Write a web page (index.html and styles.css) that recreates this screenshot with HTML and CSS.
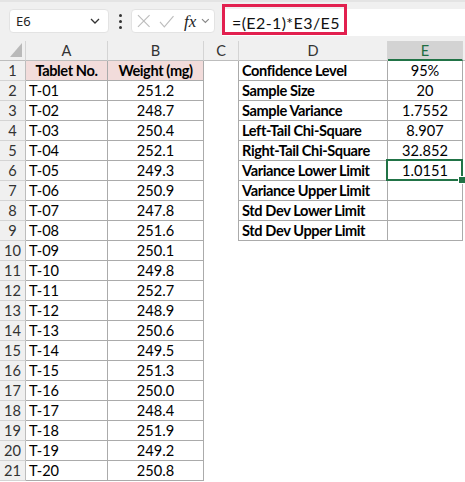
FILE: index.html
```html
<!DOCTYPE html>
<html>
<head>
<meta charset="utf-8">
<link rel="stylesheet" href="styles.css">
</head>
<body>
<div class="toolbar">
  <div class="namebox"><span>E6</span>
    <svg class="chev" width="10" height="6" viewBox="0 0 10 6"><path d="M1 1 L5 5 L9 1" fill="none" stroke="#333" stroke-width="1.3"/></svg>
  </div>
  <div class="dots"><i></i><i></i><i></i></div>
  <div class="fxbox">
    <svg width="14" height="14" viewBox="0 0 14 14"><path d="M1 1 L13 13 M13 1 L1 13" stroke="#bdbdbd" stroke-width="1.2" fill="none"/></svg>
    <svg width="16" height="13" viewBox="0 0 16 13"><path d="M1 7 L5.5 12 L15 1" stroke="#bdbdbd" stroke-width="1.2" fill="none"/></svg>
    <span class="fx">fx</span>
    <svg width="9" height="6" viewBox="0 0 9 6"><path d="M1 1 L4.5 4.5 L8 1" fill="none" stroke="#888" stroke-width="1.2"/></svg>
  </div>
  <div class="formula"><span class="ftext">=(E2-1)*E3/E5</span><div class="highlight"></div></div>
</div>
<div class="sheet">
  <div class="corner"><svg width="12" height="14" viewBox="0 0 12 14"><polygon points="12,0 12,14 0,14" fill="#b9b9b9"/></svg></div>
  <div class="ch">A</div><div class="ch">B</div><div class="ch">C</div><div class="ch">D</div><div class="ch sel">E</div><div class="ch end"></div>

  <div class="rh">1</div><div class="t n b pk">Tablet No.</div><div class="t n b pk">Weight (mg)</div><div class="c cb"></div><div class="t l b">Confidence Level</div><div class="t n">95%</div><div class="c"></div>
  <div class="rh">2</div><div class="t l">T-01</div><div class="t n">251.2</div><div class="c cb"></div><div class="t l b">Sample Size</div><div class="t n">20</div><div class="c"></div>
  <div class="rh">3</div><div class="t l">T-02</div><div class="t n">248.7</div><div class="c cb"></div><div class="t l b">Sample Variance</div><div class="t n">1.7552</div><div class="c"></div>
  <div class="rh">4</div><div class="t l">T-03</div><div class="t n">250.4</div><div class="c cb"></div><div class="t l b">Left-Tail Chi-Square</div><div class="t n">8.907</div><div class="c"></div>
  <div class="rh">5</div><div class="t l">T-04</div><div class="t n">252.1</div><div class="c cb"></div><div class="t l b">Right-Tail Chi-Square</div><div class="t n">32.852</div><div class="c"></div>
  <div class="rh">6</div><div class="t l">T-05</div><div class="t n">249.3</div><div class="c cb"></div><div class="t l b">Variance Lower Limit</div><div class="t n active">1.0151</div><div class="c"></div>
  <div class="rh">7</div><div class="t l">T-06</div><div class="t n">250.9</div><div class="c cb"></div><div class="t l b">Variance Upper Limit</div><div class="t n"></div><div class="c"></div>
  <div class="rh">8</div><div class="t l">T-07</div><div class="t n">247.8</div><div class="c cb"></div><div class="t l b">Std Dev Lower Limit</div><div class="t n"></div><div class="c"></div>
  <div class="rh">9</div><div class="t l">T-08</div><div class="t n">251.6</div><div class="c cb"></div><div class="t l b">Std Dev Upper Limit</div><div class="t n"></div><div class="c"></div>
  <div class="rh">10</div><div class="t l">T-09</div><div class="t n">250.1</div><div class="c"></div><div class="c"></div><div class="c"></div><div class="c"></div>
  <div class="rh">11</div><div class="t l">T-10</div><div class="t n">249.8</div><div class="c"></div><div class="c"></div><div class="c"></div><div class="c"></div>
  <div class="rh">12</div><div class="t l">T-11</div><div class="t n">252.7</div><div class="c"></div><div class="c"></div><div class="c"></div><div class="c"></div>
  <div class="rh">13</div><div class="t l">T-12</div><div class="t n">248.9</div><div class="c"></div><div class="c"></div><div class="c"></div><div class="c"></div>
  <div class="rh">14</div><div class="t l">T-13</div><div class="t n">250.6</div><div class="c"></div><div class="c"></div><div class="c"></div><div class="c"></div>
  <div class="rh">15</div><div class="t l">T-14</div><div class="t n">249.5</div><div class="c"></div><div class="c"></div><div class="c"></div><div class="c"></div>
  <div class="rh">16</div><div class="t l">T-15</div><div class="t n">251.3</div><div class="c"></div><div class="c"></div><div class="c"></div><div class="c"></div>
  <div class="rh">17</div><div class="t l">T-16</div><div class="t n">250.0</div><div class="c"></div><div class="c"></div><div class="c"></div><div class="c"></div>
  <div class="rh">18</div><div class="t l">T-17</div><div class="t n">248.4</div><div class="c"></div><div class="c"></div><div class="c"></div><div class="c"></div>
  <div class="rh">19</div><div class="t l">T-18</div><div class="t n">251.9</div><div class="c"></div><div class="c"></div><div class="c"></div><div class="c"></div>
  <div class="rh">20</div><div class="t l">T-19</div><div class="t n">249.2</div><div class="c"></div><div class="c"></div><div class="c"></div><div class="c"></div>
  <div class="rh">21</div><div class="t l">T-20</div><div class="t n">250.8</div><div class="c"></div><div class="c"></div><div class="c"></div><div class="c"></div>
</div>
</body>
</html>
```
FILE: styles.css
```css
html, body {
  margin: 0;
  padding: 0;
}
body {
  width: 465px;
  height: 482px;
  overflow: hidden;
  background: #ffffff;
  font-family: Lato, "Liberation Sans", sans-serif;
  color: #000;
}
.toolbar {
  height: 41px;
  box-sizing: border-box;
  background: #f0f0f0;
  box-shadow: inset 0 2px 0 #e4e4e4;
  display: flex;
  align-items: flex-start;
  padding: 9px 0 0 9px;
}
.namebox {
  width: 100px;
  height: 24px;
  box-sizing: border-box;
  background: #fff;
  border: 1px solid #e3e3e3;
  border-radius: 4px;
  display: flex;
  align-items: center;
  justify-content: space-between;
  padding: 0 8px 0 6px;
  font-family: "Noto Sans", sans-serif;
  font-size: 13px;
  color: #222;
}
.dots {
  width: 4px;
  margin-left: 9px;
  height: 24px;
  display: flex;
  flex-direction: column;
  justify-content: center;
  gap: 3px;
  align-items: center;
}
.dots i {
  display: block;
  width: 3px;
  height: 3px;
  border-radius: 50%;
  background: #333;
}
.fxbox {
  width: 84px;
  height: 24px;
  box-sizing: border-box;
  margin-left: 9px;
  background: #fff;
  border: 1px solid #e3e3e3;
  border-radius: 4px;
  display: flex;
  align-items: center;
  padding: 0 4px 0 5px;
  gap: 8px;
}
.fx {
  font-family: "Liberation Serif", serif;
  font-style: italic;
  font-size: 17px;
  color: #222;
  margin-left: 2px;
  margin-right: -3px;
  line-height: 1;
}
.formula {
  position: relative;
  flex: 1;
  margin-left: 7px;
  height: 27px;
  background: #fff;
  display: flex;
  align-items: center;
  padding-left: 10px;
}
.ftext {
  font-family: Lato, sans-serif;
  font-size: 16px;
  letter-spacing: 0.4px;
  color: #111;
}
.highlight {
  position: absolute;
  left: 0;
  top: -5px;
  width: 125px;
  height: 31px;
  box-sizing: border-box;
  border: 3px solid #e2204f;
}
.sheet {
  display: grid;
  grid-template-columns: 26px 82px 96px 35px 149px 75px 2px;
  grid-auto-rows: 20px;
  font-size: 14.6px;
}
.sheet > div {
  box-sizing: border-box;
  display: flex;
  align-items: center;
  white-space: nowrap;
  overflow: visible;
}
.corner {
  background: #f0f0f0;
  border-right: 1px solid #d4d4d4;
  border-bottom: 1px solid #bdbdbd;
  justify-content: flex-end;
  align-items: flex-end !important;
  padding: 0 3px 3px 0;
}
.corner svg { display: block; }
.ch {
  background: #f0f0f0;
  border-right: 1px solid #d4d4d4;
  border-bottom: 1px solid #bdbdbd;
  justify-content: center;
  color: #333;
}
.ch.end { border-right: none; }
.ch.sel {
  background: #d3d3d3;
  color: #1e6e42;
  border-bottom: 2px solid #217346;
}
.rh {
  background: #f0f0f0;
  border-right: 1px solid #bdbdbd;
  border-bottom: 1px solid #d4d4d4;
  justify-content: center;
  color: #333;
}
.t {
  border-right: 1px solid #ababab;
  border-bottom: 1px solid #ababab;
}
.cb {
  border-right: 1px solid #ababab;
}
.l {
  justify-content: flex-start;
  padding-left: 3px;
}
.n {
  justify-content: center;
}
.b {
  font-weight: bold;
  letter-spacing: -0.4px;
}
.pk {
  background: #f2dcdb;
}
.active {
  position: relative;
}
.active::after {
  content: "";
  position: absolute;
  left: -2px;
  top: -2px;
  right: -1px;
  bottom: -1px;
  border: 2px solid #217346;
}
.active::before {
  content: "";
  position: absolute;
  right: -4px;
  bottom: -4px;
  width: 6px;
  height: 6px;
  background: #217346;
  border: 1px solid #fff;
  z-index: 2;
}
```
